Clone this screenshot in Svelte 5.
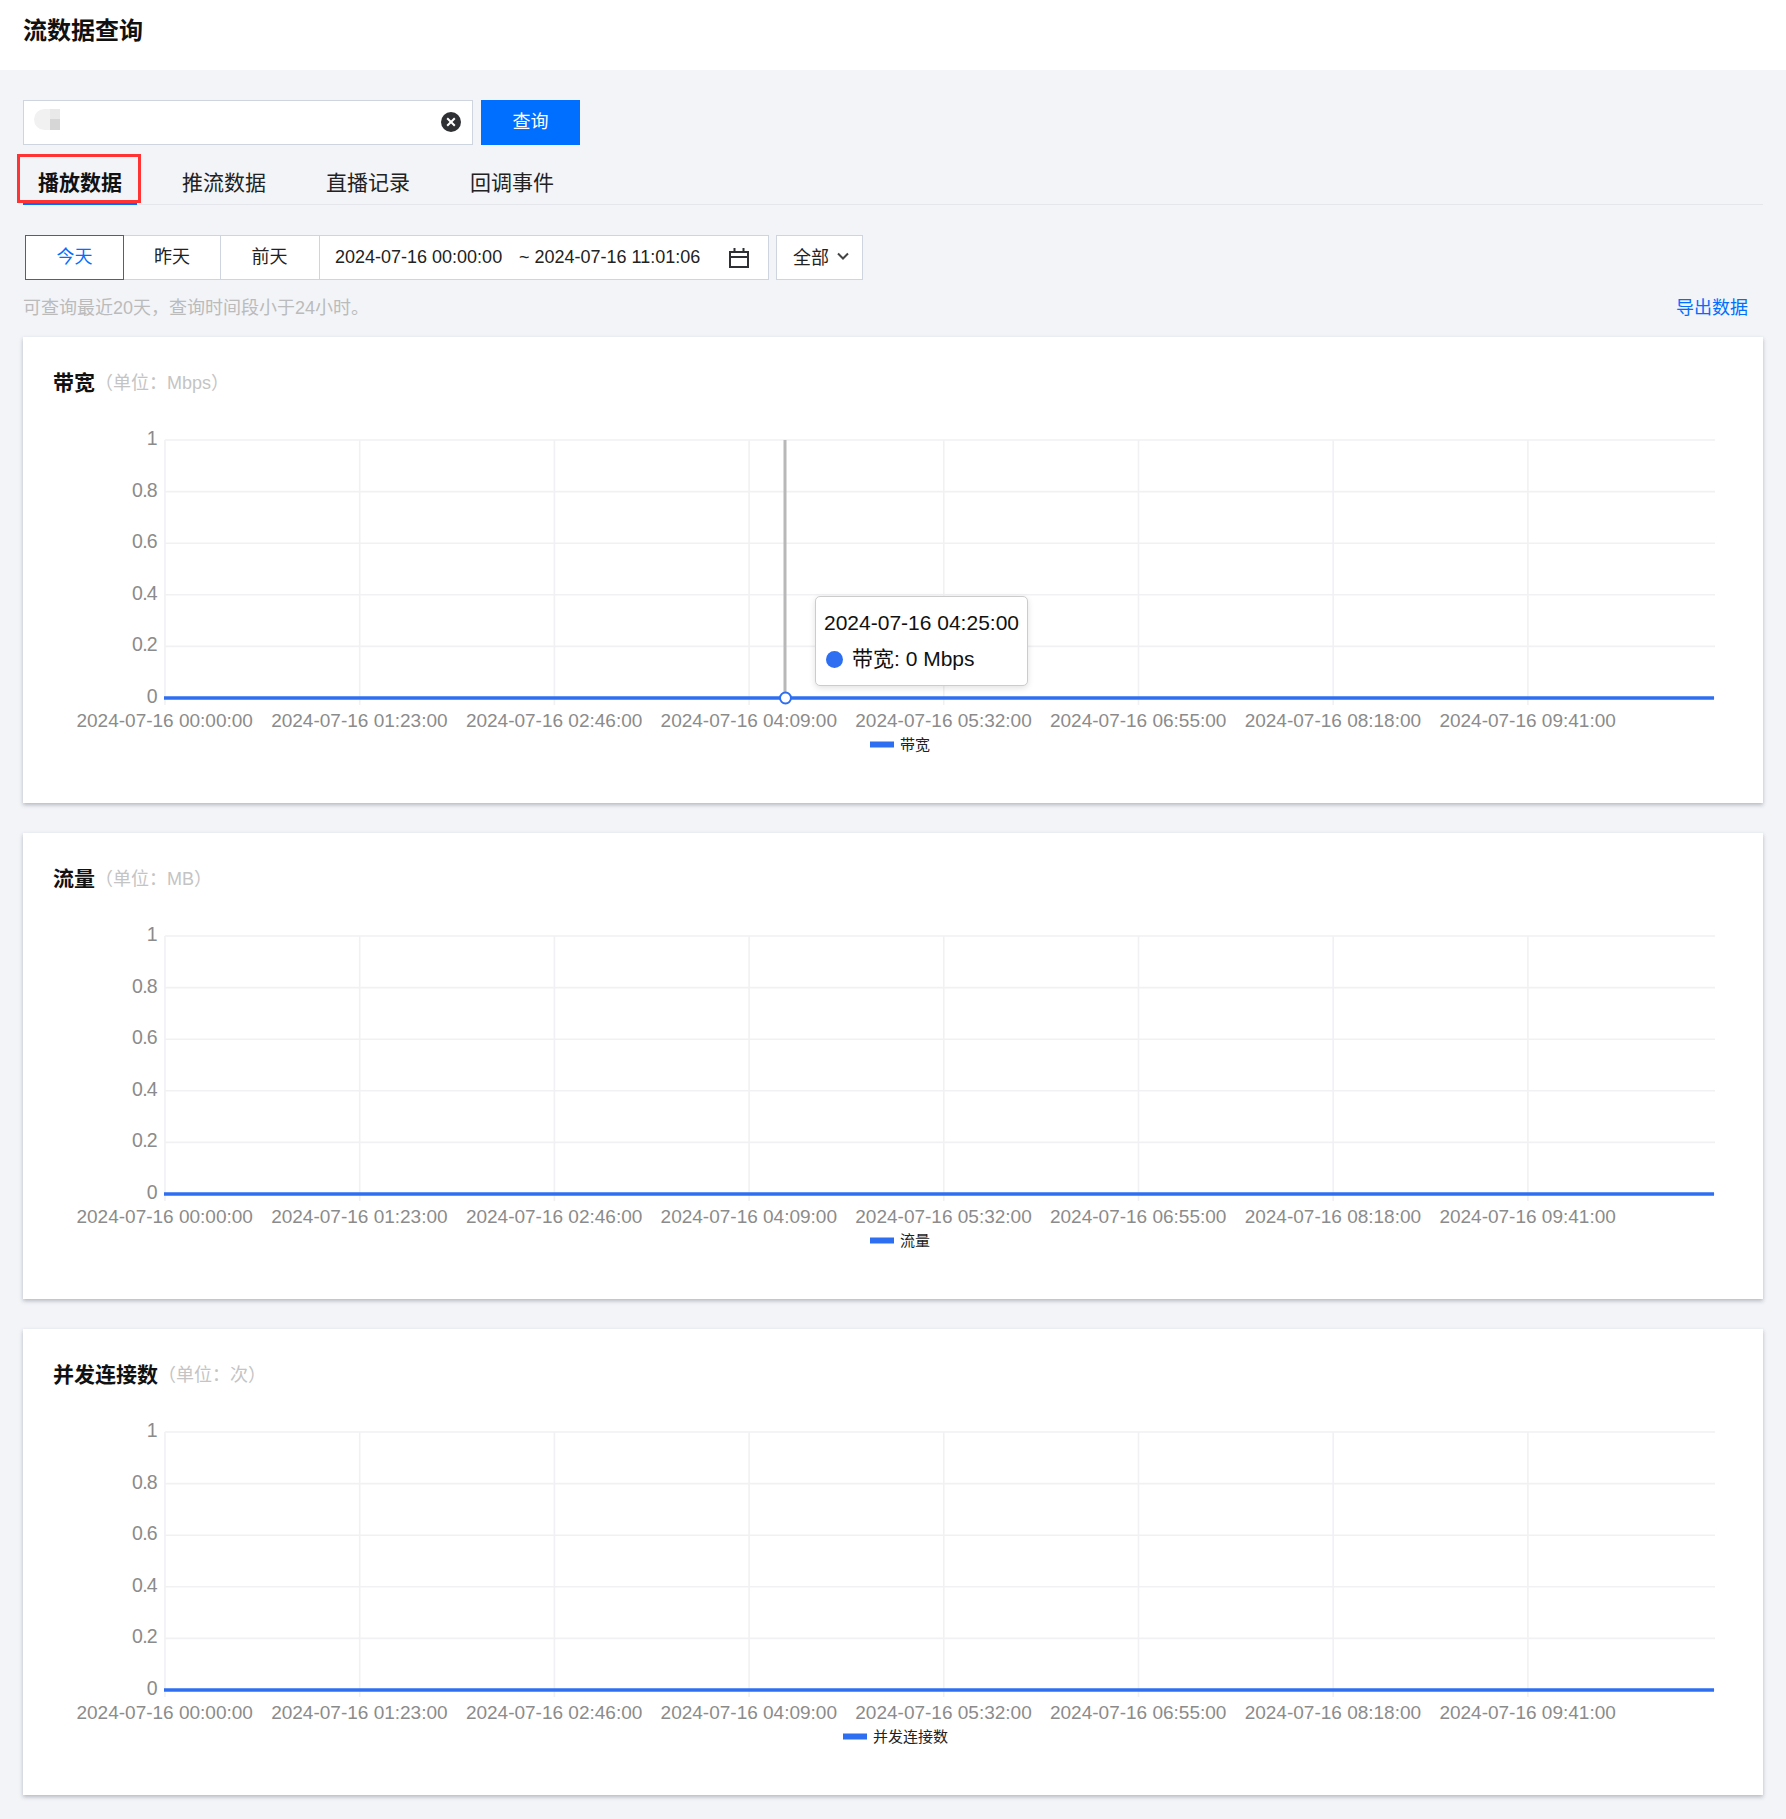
<script>
  const ticks = ['00:00:00','01:23:00','02:46:00','04:09:00','05:32:00','06:55:00','08:18:00','09:41:00'];
  const yLabels = ['1','0.8','0.6','0.4','0.2','0'];
  const left = 142, right = 1692, top = 103, bottom = 361, step = 194.7;
  const rowGap = (bottom - top) / 5;
  const charts = [
    { title: '带宽', unit: '（单位：Mbps）', legend: '带宽', swatch: 847, hover: true },
    { title: '流量', unit: '（单位：MB）', legend: '流量', swatch: 847 },
    { title: '并发连接数', unit: '（单位：次）', legend: '并发连接数', swatch: 820 }
  ];
  const tabs = ['播放数据', '推流数据', '直播记录', '回调事件'];
  const days = ['今天', '昨天', '前天'];
</script>

<div class="page">
  <header class="top">流数据查询</header>

  <main class="content">
    <div class="search">
      <div class="input">
        <span class="mask"><i class="m1"></i><i class="m2"></i></span>
        <svg class="clear" width="20" height="20" viewBox="0 0 20 20">
          <circle cx="10" cy="10" r="10" fill="#2f3033" />
          <path d="M6.2 6.2l7.6 7.6M13.8 6.2l-7.6 7.6" stroke="#fff" stroke-width="2" />
        </svg>
      </div>
      <button class="query">查询</button>
    </div>

    <nav class="tabs">
      {#each tabs as tab, i}
        <div class="tab" class:active={i === 0}>{tab}</div>
      {/each}
      <span class="redbox"></span>
    </nav>

    <div class="filters">
      <div class="days">
        {#each days as day, i}
          <div class="day" class:on={i === 0}>{day}</div>
        {/each}
      </div>
      <div class="range">
        <span class="from">2024-07-16 00:00:00</span>
        <span class="to">~ 2024-07-16 11:01:06</span>
        <svg class="cal" width="20" height="20" viewBox="0 0 20 20" fill="none" stroke="#2f3033" stroke-width="2">
          <rect x="1" y="4" width="18" height="15" />
          <path d="M1 9h18M5.5 0v5M14.5 0v5" />
        </svg>
      </div>
      <div class="select">
        <span>全部</span>
        <svg width="12" height="8" viewBox="0 0 12 8" fill="none" stroke="#444" stroke-width="2"><path d="M1 1.5l5 5 5-5" /></svg>
      </div>
    </div>

    <div class="hintrow">
      <span class="hint">可查询最近20天，查询时间段小于24小时。</span>
      <a class="export" href="#export">导出数据</a>
    </div>

    {#each charts as c}
      <section class="card">
        <h2><b>{c.title}</b><span>{c.unit}</span></h2>
        <svg class="chart" width="1740" height="416" viewBox="0 50 1740 416">
          {#each yLabels as _, i}
            <line class="grid" x1={left} x2={right} y1={top + i * rowGap} y2={top + i * rowGap} />
          {/each}
          {#each ticks as _, i}
            <line class="grid" x1={left + i * step} x2={left + i * step} y1={top} y2={bottom + 7} />
          {/each}
          {#each yLabels as label, i}
            <text class="axis ylab" x={134} y={top + i * rowGap + 5} text-anchor="end">{label}</text>
          {/each}
          {#each ticks as tick, i}
            <text class="axis" x={left + i * step - 0.3} y={390} text-anchor="middle">2024-07-16 {tick}</text>
          {/each}
          {#if c.hover}
            <line class="cross" x1="762" x2="762" y1={top} y2={bottom} />
          {/if}
          <line class="series" x1={left - 1} x2={1691} y1={bottom} y2={bottom} />
          {#if c.hover}
            <circle class="dot" cx="762.5" cy={bottom} r="5.5" />
          {/if}
          <rect class="swatch" x={c.swatch} y="404.5" width="24" height="6" />
          <text class="legend" x={c.swatch + 30} y="413">{c.legend}</text>
        </svg>
        {#if c.hover}
          <div class="tooltip">
            <div>2024-07-16 04:25:00</div>
            <div class="val"><i></i>带宽: 0 Mbps</div>
          </div>
        {/if}
      </section>
    {/each}
  </main>
</div>

<style>
  :global(body) { margin: 0; background: #f2f4f8; }
  .page {
    width: 1786px;
    height: 1819px;
    background: #f2f4f8;
    font-family: "Liberation Sans", "Noto Sans CJK SC", sans-serif;
    color: #000;
    overflow: hidden;
  }
  .top {
    height: 70px;
    line-height: 62px;
    padding-left: 23px;
    background: #fff;
    font-size: 24px;
    font-weight: 700;
    color: #111;
  }
  .content { padding: 30px 23px 0; }
  .search { display: flex; gap: 8px; height: 45px; }
  .input {
    position: relative;
    width: 450px;
    box-sizing: border-box;
    background: #fff;
    border: 1px solid #cfd5de;
  }
  .mask { position: absolute; left: 10px; top: 8px; width: 26px; height: 21px; }
  .mask i { position: absolute; display: block; height: 21px; top: 0; }
  .m1 { left: 0; width: 20px; border-radius: 10.5px 0 0 10.5px; background: #f1f1f1; }
  .m2 { left: 16px; width: 10px; background: linear-gradient(#e9e9e9 48%, #d5d6d5 48%); }
  .clear { position: absolute; right: 11px; top: 11px; }
  .query {
    width: 99px;
    height: 45px;
    padding: 0 0 6px;
    border: 0;
    background: #006eff;
    color: #fff;
    font: 18px "Liberation Sans", "Noto Sans CJK SC", sans-serif;
  }
  .tabs {
    position: relative;
    display: flex;
    gap: 60px;
    height: 60px;
    padding: 0 15px;
    box-sizing: border-box;
    border-bottom: 1px solid #e4e6ec;
  }
  .tab {
    font-size: 21px;
    line-height: 76px;
    height: 60px;
    color: #222;
    white-space: nowrap;
  }
  .tab.active { font-weight: 700; color: #111; }
  .tab.active::after {
    content: "";
    position: absolute;
    left: 0;
    top: 58px;
    width: 114px;
    height: 2px;
    background: #006eff;
  }
  .redbox {
    position: absolute;
    left: -6px;
    top: 9px;
    width: 118px;
    height: 43px;
    border: 3px solid #f33;
  }
  .filters { display: flex; margin: 30px 0 0 2px; height: 45px; }
  .days { display: flex; }
  .day {
    width: 98px;
    margin-left: -1px;
    box-sizing: border-box;
    background: #fff;
    border: 1px solid #cfd5de;
    font-size: 18px;
    line-height: 42px;
    text-align: center;
    color: #222;
  }
  .day:first-child { width: 99px; margin-left: 0; }
  .day:last-child { width: 100px; padding-right: 1px; }
  .day.on { position: relative; color: #006eff; border-color: #006eff; }
  .range {
    position: relative;
    display: flex;
    width: 450px;
    margin-left: -1px;
    box-sizing: border-box;
    padding-left: 15px;
    background: #fff;
    border: 1px solid #cfd5de;
    font-size: 18px;
    line-height: 43px;
    color: #222;
  }
  .from { width: 184px; }
  .cal { position: absolute; right: 19px; top: 12px; }
  .select {
    display: flex;
    align-items: center;
    gap: 8px;
    width: 87px;
    box-sizing: border-box;
    margin-left: 7px;
    padding: 0 0 4px 16px;
    background: #fff;
    border: 1px solid #cfd5de;
    font-size: 18px;
    color: #222;
  }
  .hintrow {
    display: flex;
    justify-content: space-between;
    height: 57px;
    line-height: 57px;
    font-size: 18px;
  }
  .hint { color: #bbb; }
  .export { margin-right: 15px; color: #006eff; text-decoration: none; }
  .card {
    position: relative;
    height: 466px;
    margin-bottom: 30px;
    background: #fff;
    box-shadow: 0 2px 4px rgba(54, 58, 80, .32);
  }
  h2 {
    margin: 0;
    height: 50px;
    padding: 30px 0 0 30px;
    box-sizing: border-box;
    font-size: 21px;
    line-height: 32px;
    font-weight: 400;
    white-space: nowrap;
  }
  h2 b { color: #111; }
  h2 span { position: relative; top: -1px; font-size: 18px; color: #c4c4c4; }
  .chart { display: block; }
  .grid { stroke: #f1f1f3; stroke-width: 1.6; }
  .axis { fill: #8b8b8b; font-size: 19px; }
  .ylab { letter-spacing: -0.7px; font-size: 19.5px; }
  .legend { fill: #222; font-size: 15px; }
  .cross { stroke: #b8b8b8; stroke-width: 3; }
  .series { stroke: #2e6ff2; stroke-width: 3.5; }
  .dot { fill: #fff; stroke: #2e6ff2; stroke-width: 2; }
  .swatch { fill: #2e6ff2; }
  .tooltip {
    position: absolute;
    left: 792px;
    top: 259px;
    width: 213px;
    height: 90px;
    box-sizing: border-box;
    padding: 8px 8px;
    background: #fff;
    border: 1px solid #ccc;
    border-radius: 5px;
    box-shadow: 0 2px 6px rgba(0, 0, 0, .12);
    font-size: 21px;
    line-height: 36px;
    color: #111;
    white-space: nowrap;
  }
  .val { display: flex; align-items: center; }
  .val i {
    width: 17px;
    height: 17px;
    margin: 0 9px 0 2px;
    border-radius: 50%;
    background: #2e6ff2;
  }
</style>
